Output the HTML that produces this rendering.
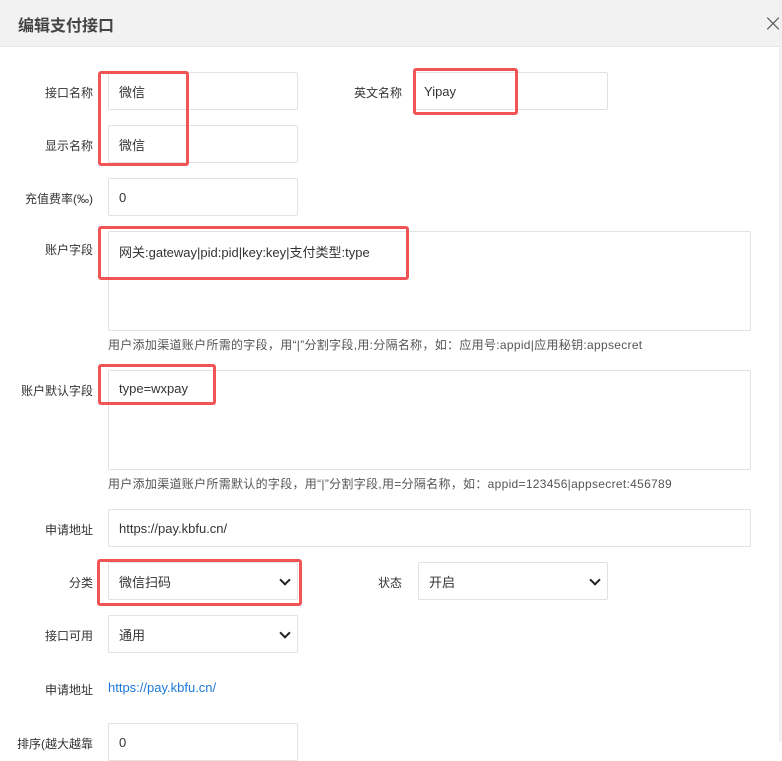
<!DOCTYPE html>
<html><head><meta charset="utf-8"><style>
body{margin:0;width:782px;height:742px;overflow:hidden;background:#fff;font-family:"Liberation Sans","Noto Sans CJK SC",sans-serif;font-size:13px;color:#333;position:relative}
.hd{position:absolute;left:0;top:0;width:779px;height:46px;background:#f2f2f2;border-bottom:1px solid #e8e8e8}
.hd span{position:absolute;left:18px;top:12px;font-size:16px;color:#444;font-weight:bold}
.x{position:absolute;left:763px;top:9px;font-size:24px;color:#555;font-family:"DejaVu Sans",sans-serif;font-weight:300}
.sb{position:absolute;left:779px;top:0;width:3px;height:742px;background:#f0f0f0}
.lb{position:absolute;text-align:right;width:120px;color:#333;font-size:12px}
.in{position:absolute;border:1px solid #e2e2e2;box-sizing:border-box;padding-left:10px;display:flex;align-items:center;background:#fff;border-radius:2px}
.ta{align-items:flex-start;padding-top:10px}
.sel::after{content:"";position:absolute;right:8px;top:13px;width:6px;height:6px;border-right:2px solid #222;border-bottom:2px solid #222;transform:rotate(45deg)}
.red{position:absolute;border:3px solid #f05454;border-radius:3px;box-sizing:border-box}
.help{position:absolute;left:108px;font-size:12px;color:#555;letter-spacing:0.3px}
</style></head><body>
<div class="hd"><span>编辑支付接口</span></div>
<div class="x">×</div>
<div class="sb"></div>

<div class="lb" style="left:-27px;top:84px">接口名称</div>
<div class="in" style="left:108px;top:72px;width:190px;height:38px">微信</div>
<div class="lb" style="left:282px;top:84px">英文名称</div>
<div class="in" style="left:413px;top:72px;width:195px;height:38px">Yipay</div>

<div class="lb" style="left:-27px;top:137px">显示名称</div>
<div class="in" style="left:108px;top:125px;width:190px;height:38px">微信</div>

<div class="lb" style="left:-27px;top:190px">充值费率(‰)</div>
<div class="in" style="left:108px;top:178px;width:190px;height:38px">0</div>

<div class="lb" style="left:-27px;top:241px">账户字段</div>
<div class="in ta" style="left:108px;top:231px;width:643px;height:100px">网关:gateway|pid:pid|key:key|支付类型:type</div>
<div class="help" style="top:336px">用户添加渠道账户所需的字段，用“|”分割字段,用:分隔名称，如：应用号:appid|应用秘钥:appsecret</div>

<div class="lb" style="left:-27px;top:382px">账户默认字段</div>
<div class="in ta" style="left:108px;top:370px;width:643px;height:100px">type=wxpay</div>
<div class="help" style="top:475px">用户添加渠道账户所需默认的字段，用“|”分割字段,用=分隔名称，如：appid=123456|appsecret:456789</div>

<div class="lb" style="left:-27px;top:521px">申请地址</div>
<div class="in" style="left:108px;top:509px;width:643px;height:38px">https://pay.kbfu.cn/</div>

<div class="lb" style="left:-27px;top:574px">分类</div>
<div class="in sel" style="left:108px;top:562px;width:190px;height:38px">微信扫码</div>
<div class="lb" style="left:282px;top:574px">状态</div>
<div class="in sel" style="left:418px;top:562px;width:190px;height:38px">开启</div>

<div class="lb" style="left:-27px;top:627px">接口可用</div>
<div class="in sel" style="left:108px;top:615px;width:190px;height:38px">通用</div>

<div class="lb" style="left:-27px;top:681px">申请地址</div>
<div style="position:absolute;left:108px;top:680px;color:#1e7ad8">https://pay.kbfu.cn/</div>

<div class="lb" style="left:-27px;top:735px">排序(越大越靠</div>
<div class="in" style="left:108px;top:723px;width:190px;height:38px">0</div>

<div class="red" style="left:98px;top:71px;width:91px;height:95px"></div>
<div class="red" style="left:413px;top:68px;width:105px;height:47px"></div>
<div class="red" style="left:98px;top:226px;width:311px;height:54px"></div>
<div class="red" style="left:98px;top:364px;width:118px;height:41px"></div>
<div class="red" style="left:97px;top:559px;width:205px;height:47px"></div>
</body></html>
